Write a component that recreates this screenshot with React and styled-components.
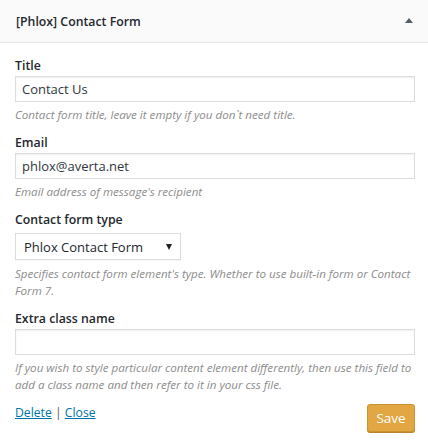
import React from "react";
import styled, { createGlobalStyle } from "styled-components";

const GlobalStyle = createGlobalStyle`
    html, body {
        margin: 0;
        padding: 0;
        background: #ffffff;
    }
    body {
        font-family: "Open Sans", "Noto Sans", sans-serif;
        color: #23282d;
    }
`;

const Panel = styled.div`
    width: 428px;
    height: 448px;
    background: #ffffff;
    overflow: hidden;
`;

const PanelHeader = styled.div`
    height: 42px;
    display: flex;
    align-items: center;
    justify-content: space-between;
    padding: 0 15px 0 16px;
    background: #fafafa;
    border-bottom: 1px solid #e5e5e5;
    font-size: 12.3px;
    font-weight: 600;
    color: #23282d;
`;

const Toggle = styled.span`
    width: 0;
    height: 0;
    border-left: 4px solid transparent;
    border-right: 4px solid transparent;
    border-bottom: 5px solid #555d66;
    margin-bottom: 2px;
`;

const PanelBody = styled.div`
    padding: 13px 13px 0 15px;
`;

const Field = styled.div`
    display: flex;
    flex-direction: column;
    margin-bottom: 10px;
`;

const Label = styled.label`
    font-size: 12.3px;
    font-weight: 600;
    line-height: 19px;
    color: #23282d;
    margin-bottom: ${p => (p.$gap ? p.$gap : 1)}px;
`;

const TextInput = styled.input`
    box-sizing: border-box;
    width: 100%;
    height: 26px;
    margin: 0;
    padding: 0 6px;
    border: 1px solid #dddddd;
    box-shadow: inset 0 1px 2px rgba(0, 0, 0, 0.07);
    background: #ffffff;
    font-family: inherit;
    font-size: 13px;
    color: #32373c;
    outline: none;
`;

const SelectWrap = styled.div`
    position: relative;
    width: 166px;
    height: 27px;
`;

const Select = styled.select`
    box-sizing: border-box;
    width: 100%;
    height: 100%;
    margin: 0;
    padding: 0 24px 0 8px;
    border: 1px solid #dddddd;
    box-shadow: 0 1px 1px rgba(0, 0, 0, 0.04);
    background: #ffffff;
    appearance: none;
    -webkit-appearance: none;
    border-radius: 0;
    font-family: inherit;
    font-size: 13px;
    color: #23282d;
    outline: none;
`;

const SelectArrow = styled.span`
    position: absolute;
    right: 9px;
    top: 11px;
    width: 0;
    height: 0;
    border-left: 3px solid transparent;
    border-right: 3px solid transparent;
    border-top: 6px solid #222222;
    pointer-events: none;
`;

const Help = styled.p`
    margin: ${p => (p.$gap ? p.$gap : 4)}px 0 0 0;
    font-size: 11.6px;
    font-style: italic;
    line-height: 17px;
    color: #8c8c8c;
`;

const Footer = styled.div`
    display: flex;
    justify-content: space-between;
    align-items: flex-start;
    margin-top: 2px;
`;

const Links = styled.div`
    font-size: 12.2px;
    line-height: 20px;
    color: #555d66;
`;

const Link = styled.a`
    color: #0073aa;
    text-decoration: underline;
`;

const SaveButton = styled.button`
    box-sizing: border-box;
    width: 48px;
    height: 28px;
    margin-top: 1px;
    padding: 0;
    border: 1px solid #c8922f;
    border-radius: 3px;
    background: #e2a743;
    box-shadow: 0 1px 0 #b8852a;
    color: #ffffff;
    font-family: inherit;
    font-size: 13.5px;
    cursor: pointer;
`;

export default function App() {
    return (
        <>
            <GlobalStyle />
            <Panel>
                <PanelHeader>
                    <span>[Phlox] Contact Form</span>
                    <Toggle />
                </PanelHeader>
                <PanelBody>
                    <Field>
                        <Label htmlFor="title">Title</Label>
                        <TextInput id="title" type="text" defaultValue="Contact Us" />
                        <Help>Contact form title, leave it empty if you don`t need title.</Help>
                    </Field>
                    <Field>
                        <Label htmlFor="email">Email</Label>
                        <TextInput id="email" type="text" defaultValue="phlox@averta.net" />
                        <Help>Email address of message's recipient</Help>
                    </Field>
                    <Field>
                        <Label htmlFor="type" $gap={4}>Contact form type</Label>
                        <SelectWrap>
                            <Select id="type" defaultValue="phlox">
                                <option value="phlox">Phlox Contact Form</option>
                                <option value="cf7">Contact Form 7</option>
                            </Select>
                            <SelectArrow />
                        </SelectWrap>
                        <Help $gap={5}>Specifies contact form element's type. Whether to use built-in form or Contact Form 7.</Help>
                    </Field>
                    <Field>
                        <Label htmlFor="extra">Extra class name</Label>
                        <TextInput id="extra" type="text" />
                        <Help>If you wish to style particular content element differently, then use this field to add a class name and then refer to it in your css file.</Help>
                    </Field>
                    <Footer>
                        <Links>
                            <Link href="#">Delete</Link> | <Link href="#">Close</Link>
                        </Links>
                        <SaveButton type="button">Save</SaveButton>
                    </Footer>
                </PanelBody>
            </Panel>
        </>
    );
}
